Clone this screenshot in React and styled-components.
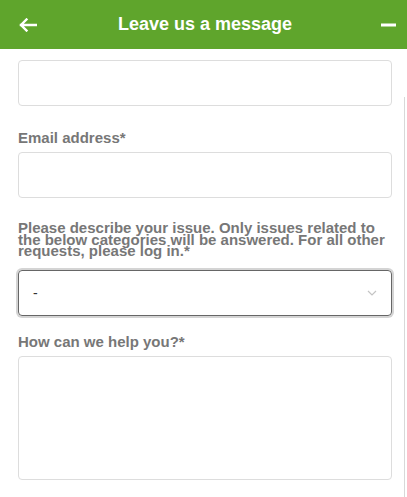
import styled, { createGlobalStyle } from "styled-components";

const GlobalStyle = createGlobalStyle`
  body {
    margin: 0;
    background: #fff;
    font-family: "Liberation Sans", Arial, sans-serif;
  }
`;

const Widget = styled.div`
  position: relative;
  width: 407px;
  height: 497px;
  overflow: hidden;
  background: #fff;
`;

const Header = styled.div`
  height: 49px;
  background-color: #5fa52c;
  display: grid;
  grid-template-columns: 56px 1fr 56px;
  align-items: center;
  color: #fff;
`;

const IconButton = styled.button`
  border: none;
  background: none;
  padding: 0;
  display: flex;
  align-items: center;
  justify-content: ${({ align }) => align || "center"};
  padding-left: ${({ pl }) => pl || "0"};
  padding-right: ${({ pr }) => pr || "0"};
  height: 49px;
  color: #fff;
  cursor: pointer;
`;

const Title = styled.h1`
  margin: 0;
  padding-left: 3px;
  text-align: center;
  font-size: 18px;
  font-weight: bold;
`;

const Form = styled.div`
  padding: 11px 15px 0 18px;
  display: flex;
  flex-direction: column;
`;

const Field = styled.div`
  display: flex;
  flex-direction: column;
  margin-top: ${({ mt }) => mt || "0"};
`;

const Label = styled.label`
  color: #777;
  font-size: 15px;
  font-weight: bold;
  line-height: ${({ lh }) => lh || "17px"};
  margin-bottom: ${({ mb }) => mb || "6px"};
`;

const Input = styled.div`
  height: 44px;
  border: 1px solid #ddd;
  border-radius: 4px;
  background: #fff;
`;

const Select = styled.div`
  height: 44px;
  border: 1px solid #666;
  border-radius: 4px;
  box-shadow: 0 0 0 2px #d4d4d4;
  display: flex;
  align-items: center;
  justify-content: space-between;
  padding: 0 14px 0 14px;
  color: #333;
  font-size: 14px;
`;

const TextArea = styled.div`
  height: 122px;
  border: 1px solid #ddd;
  border-radius: 4px;
`;

const Scrollbar = styled.div`
  position: absolute;
  right: 2px;
  top: 97px;
  bottom: 0;
  width: 1px;
  background: #d8d8d8;
`;

export default function App() {
  return (
    <>
      <GlobalStyle />
      <Widget>
        <Header>
          <IconButton align="flex-start" pl="19px" aria-label="back">
            <svg width="18" height="14" viewBox="0 0 18 14" fill="none">
              <path
                d="M17 7H2M7.5 1.5L2 7l5.5 5.5"
                stroke="#fff"
                strokeWidth="2.4"
                strokeLinecap="square"
              />
            </svg>
          </IconButton>
          <Title>Leave us a message</Title>
          <IconButton align="flex-end" pr="11px" aria-label="minimize">
            <svg width="15" height="4" viewBox="0 0 15 4">
              <rect x="0" y="0.5" width="15" height="3" fill="#fff" />
            </svg>
          </IconButton>
        </Header>
        <Form>
          <Field>
            <Input />
          </Field>
          <Field mt="23px">
            <Label>Email address*</Label>
            <Input />
          </Field>
          <Field mt="24px">
            <Label lh="11.5px" mb="13px">
              Please describe your issue. Only issues related to the below
              categories will be answered. For all other requests, please log
              in.*
            </Label>
            <Select>
              <span>-</span>
              <svg width="10" height="6" viewBox="0 0 10 6" fill="none">
                <path d="M1 1l4 4 4-4" stroke="#c4c4c4" strokeWidth="1.2" />
              </svg>
            </Select>
          </Field>
          <Field mt="17px">
            <Label>How can we help you?*</Label>
            <TextArea />
          </Field>
        </Form>
        <Scrollbar />
      </Widget>
    </>
  );
}
